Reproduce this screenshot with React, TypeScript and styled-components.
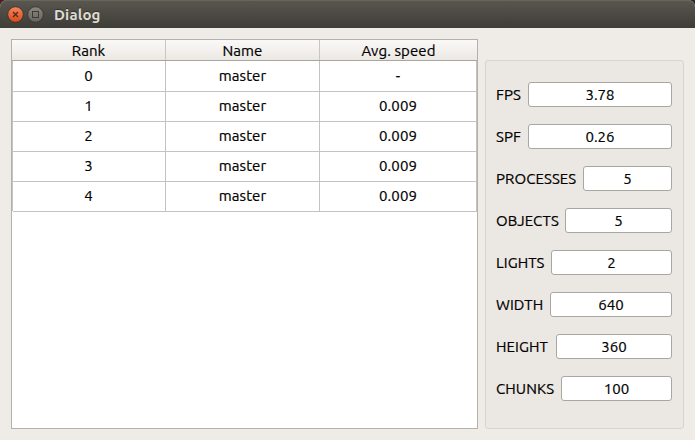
import React from "react";
import styled, { createGlobalStyle } from "styled-components";

const GlobalStyle = createGlobalStyle`
  * { box-sizing: border-box; }
  html, body { margin: 0; padding: 0; }
  body {
    overflow: hidden;
    background: linear-gradient(90deg, #4a1f22, #2a2930);
    font-family: Ubuntu, "Noto Sans", sans-serif;
    font-size: 15px;
    letter-spacing: 0.08px;
    color: #000;
    -webkit-text-stroke: 0.2px;
  }
`;

const Window = styled.div`
  display: flex;
  flex-direction: column;
  width: 695px;
  height: 440px;
  background: #efebe7;
  border-radius: 7px 7px 0 0;
`;

const TitleBar = styled.header`
  display: flex;
  align-items: center;
  flex: 0 0 28px;
  padding: 1px 7px 0;
  gap: 3px;
  border-radius: 7px 7px 0 0;
  background: linear-gradient(#5a574f, #3d3c37);
  box-shadow: inset 0 1px 0 #68655c;
`;

const Title = styled.h1`
  margin: 0 0 0 7px;
  font-size: 15px;
  line-height: 20px;
  font-weight: 700;
  letter-spacing: 0.15px;
  color: #dfdbd2;
  text-shadow: 0 -1px 0 #33322e;
  -webkit-text-stroke: 0;
`;

const Content = styled.main`
  display: flex;
  flex: 1;
  gap: 7px;
  padding: 11px;
`;

const TableFrame = styled.section`
  flex: 0 0 467px;
  border: 1px solid #b4b1ad;
  background: #fff;
`;

const HeaderRow = styled.div`
  display: grid;
  grid-template-columns: 154px 154px 1fr;
  height: 21px;
  border-bottom: 1px solid #a8a69f;
  background: linear-gradient(#fbf9f7, #ebe8e4);
`;

const HeaderCell = styled.div`
  height: 20px;
  line-height: 22px;
  text-align: center;
  border-right: 1px solid #c9c6c2;
  &:last-child { border-right: 0; }
`;

const Row = styled.div`
  display: grid;
  grid-template-columns: 153px 154px 1fr;
  height: 30px;
  border-left: 1px solid #c3c3c3;
`;

const Cell = styled.div`
  line-height: 30px;
  text-align: center;
  border-right: 1px solid #c3c3c3;
  border-bottom: 1px solid #c3c3c3;
  &:first-child { padding-right: 1px; }
`;

const StatsPanel = styled.section`
  display: flex;
  flex-direction: column;
  flex: 0 0 199px;
  min-width: 0;
  gap: 17px;
  margin-top: 21px;
  padding: 21px 11px 0 10px;
  border: 1px solid #d7d3cf;
  border-radius: 3px;
  background: #ebe7e3;
`;

const StatRow = styled.label`
  display: flex;
  height: 25px;
`;

const StatLabel = styled.span<{ $width: number }>`
  flex: 0 0 ${(p) => p.$width}px;
  line-height: 26px;
  white-space: nowrap;
`;

const Field = styled.input`
  flex: 1 1 0;
  width: 0;
  min-width: 0;
  height: 25px;
  padding: 0;
  border: 1px solid #aaa7a3;
  border-radius: 3px;
  background: #fff;
  color: #000;
  font: inherit;
  text-align: center;
  outline: none;
`;

const columns = ["Rank", "Name", "Avg. speed"];
const rows = [
  ["0", "master", "-"],
  ["1", "master", "0.009"],
  ["2", "master", "0.009"],
  ["3", "master", "0.009"],
  ["4", "master", "0.009"],
];
const stats = [
  { label: "FPS", value: "3.78", width: 32 },
  { label: "SPF", value: "0.26", width: 32 },
  { label: "PROCESSES", value: "5", width: 87 },
  { label: "OBJECTS", value: "5", width: 69 },
  { label: "LIGHTS", value: "2", width: 55 },
  { label: "WIDTH", value: "640", width: 54 },
  { label: "HEIGHT", value: "360", width: 60 },
  { label: "CHUNKS", value: "100", width: 65 },
];

const CloseIcon = () => (
  <svg width="17" height="17" viewBox="0 0 17 17">
    <defs>
      <linearGradient id="close" x1="0" y1="0" x2="0" y2="1">
        <stop offset="0" stopColor="#f6855f" />
        <stop offset="1" stopColor="#dc4a17" />
      </linearGradient>
    </defs>
    <circle cx="8.5" cy="8.5" r="7.8" fill="url(#close)" stroke="#37352f" strokeWidth="0.9" />
    <path d="M6 6l5 5M11 6l-5 5" stroke="#4b2c20" strokeWidth="1.3" />
  </svg>
);

const MaximizeIcon = () => (
  <svg width="17" height="17" viewBox="0 0 17 17">
    <defs>
      <linearGradient id="max" x1="0" y1="0" x2="0" y2="1">
        <stop offset="0" stopColor="#8b887f" />
        <stop offset="1" stopColor="#65635b" />
      </linearGradient>
    </defs>
    <circle cx="8.5" cy="8.5" r="7.8" fill="url(#max)" stroke="#37352f" strokeWidth="0.9" />
    <rect x="5.5" y="5.5" width="6" height="6" fill="none" stroke="#3c3b36" />
  </svg>
);

export default function App() {
  return (
    <>
      <GlobalStyle />
      <Window>
        <TitleBar>
          <CloseIcon />
          <MaximizeIcon />
          <Title>Dialog</Title>
        </TitleBar>
        <Content>
          <TableFrame>
            <HeaderRow>
              {columns.map((c) => <HeaderCell key={c}>{c}</HeaderCell>)}
            </HeaderRow>
            {rows.map((r) => (
              <Row key={r[0]}>
                {r.map((v, i) => <Cell key={i}>{v}</Cell>)}
              </Row>
            ))}
          </TableFrame>
          <StatsPanel>
            {stats.map((s) => (
              <StatRow key={s.label}>
                <StatLabel $width={s.width}>{s.label}</StatLabel>
                <Field readOnly value={s.value} />
              </StatRow>
            ))}
          </StatsPanel>
        </Content>
      </Window>
    </>
  );
}
